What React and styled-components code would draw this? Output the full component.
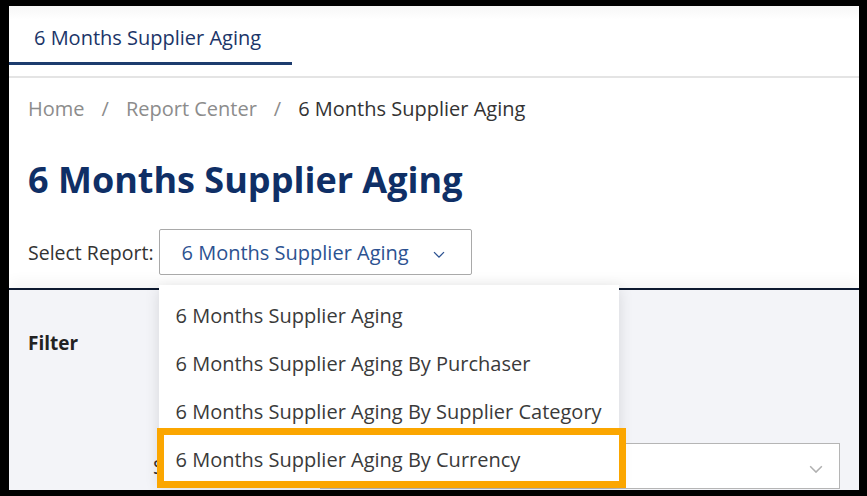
import React from "react";
import styled, { createGlobalStyle } from "styled-components";

const Global = createGlobalStyle`
  html, body { margin: 0; padding: 0; background: #000; }
  body { font-family: "Open Sans", "Noto Sans", sans-serif; }
  #root { padding: 6px 8px 6px 9px; box-sizing: border-box; height: 496px; }
`;

const Frame = styled.div`
  position: relative;
  background: #fff;
  height: 484px;
  overflow: hidden;
  display: flex;
  flex-direction: column;
`;

const TabBar = styled.div`
  height: 72px;
  border-bottom: 2px solid #e4e4e4;
  background: linear-gradient(#f7f7f7, #fff 14px);
  box-sizing: border-box;
  display: flex;
  align-items: flex-start;
`;

const Tab = styled.div`
  width: 283px;
  height: 59px;
  box-sizing: border-box;
  padding: 19px 0 0 25px;
  line-height: 26px;
  border-bottom: 3px solid #1d3c6e;
  color: #1b3568;
  font-size: 20px;
`;

const Content = styled.div`
  padding: 0 19px;
  display: flex;
  flex-direction: column;
`;

const Breadcrumb = styled.div`
  margin-top: 17px;
  display: flex;
  gap: 17px;
  font-size: 20px;
  line-height: 28px;
  color: #8c8c8c;
`;

const Crumb = styled.span`
  color: ${(p) => (p.$current ? "#333" : "#8c8c8c")};
`;

const Title = styled.h1`
  margin: 35px 0 0;
  font-size: 36px;
  font-weight: 700;
  color: #0f2f66;
  line-height: 44px;
`;

const SelectRow = styled.div`
  margin-top: 27px;
  display: flex;
  align-items: center;
  gap: 5px;
  position: relative;
`;

const Label = styled.span`
  font-size: 19.5px;
  color: #333;
`;

const SelectAnchor = styled.div`
  position: relative;
`;

const SelectBox = styled.div`
  width: 313px;
  height: 46px;
  box-sizing: border-box;
  border: 1px solid #a9a9a9;
  border-radius: 2px;
  display: flex;
  align-items: center;
  justify-content: space-between;
  padding: 0 26px 0 22px;
  color: #2c5291;
  font-size: 20px;
  background: #fff;
`;

const Chevron = ({ color = "#2c5291", size = 12 }) => (
  <svg width={size} height={size * 0.6} viewBox="0 0 12 7" style={{ marginTop: 6 }}>
    <path d="M1 1 L6 6 L11 1" fill="none" stroke={color} strokeWidth="1.3" />
  </svg>
);

const Menu = styled.div`
  position: absolute;
  left: 0;
  top: calc(100% + 10px);
  width: 460px;
  background: #fff;
  padding-top: 6px;
  box-shadow: 0 4px 14px rgba(0, 0, 0, 0.12);
  z-index: 5;
`;

const MenuItem = styled.div`
  position: relative;
  height: 48px;
  display: flex;
  align-items: center;
  padding-left: 17px;
  font-size: 20px;
  color: #3a3a3a;
  white-space: nowrap;
  &::after {
    content: "";
    display: ${(p) => (p.$highlight ? "block" : "none")};
    position: absolute;
    left: -2px;
    right: -7px;
    top: -7px;
    bottom: -5px;
    border: 7px solid #fba600;
  }
`;

const FilterPanel = styled.div`
  margin-top: 13px;
  flex: 1;
  background: #f3f4f8;
  border-top: 2px solid #0e1a30;
  box-shadow: 0 -8px 12px rgba(0, 0, 0, 0.035);
  padding: 0 19px;
  display: flex;
  flex-direction: column;
`;

const FilterTitle = styled.div`
  margin-top: 40px;
  font-size: 19px;
  line-height: 26px;
  font-weight: 700;
  color: #222;
`;

const FieldRow = styled.div`
  margin-top: 87px;
  display: flex;
  align-items: center;
  padding-left: 125px;
  gap: 12px;
`;

const FieldLabel = styled.span`
  font-size: 19.5px;
  color: #333;
`;

const FieldBox = styled.div`
  margin-left: auto;
  width: 520px;
  height: 46px;
  box-sizing: border-box;
  border: 1px solid #b5b5b5;
  background: #fff;
  display: flex;
  align-items: center;
  justify-content: flex-end;
  padding-right: 16px;
`;

const items = [
  "6 Months Supplier Aging",
  "6 Months Supplier Aging By Purchaser",
  "6 Months Supplier Aging By Supplier Category",
  "6 Months Supplier Aging By Currency",
];

export default function App() {
  return (
    <>
      <Global />
      <Frame>
        <TabBar>
          <Tab>6 Months Supplier Aging</Tab>
        </TabBar>
        <Content>
          <Breadcrumb>
            <Crumb>Home</Crumb>
            <span>/</span>
            <Crumb>Report Center</Crumb>
            <span>/</span>
            <Crumb $current>6 Months Supplier Aging</Crumb>
          </Breadcrumb>
          <Title>6 Months Supplier Aging</Title>
          <SelectRow>
            <Label>Select Report:</Label>
            <SelectAnchor>
              <SelectBox>
                <span>6 Months Supplier Aging</span>
                <Chevron />
              </SelectBox>
              <Menu>
                {items.map((t, i) => (
                  <MenuItem key={t} $highlight={i === 3}>
                    {t}
                  </MenuItem>
                ))}
              </Menu>
            </SelectAnchor>
          </SelectRow>
        </Content>
        <FilterPanel>
          <FilterTitle>Filter</FilterTitle>
          <FieldRow>
            <FieldLabel>Supplier:</FieldLabel>
            <FieldBox>
              <Chevron color="#b0b0b0" size={14} />
            </FieldBox>
          </FieldRow>
        </FilterPanel>
      </Frame>
    </>
  );
}
